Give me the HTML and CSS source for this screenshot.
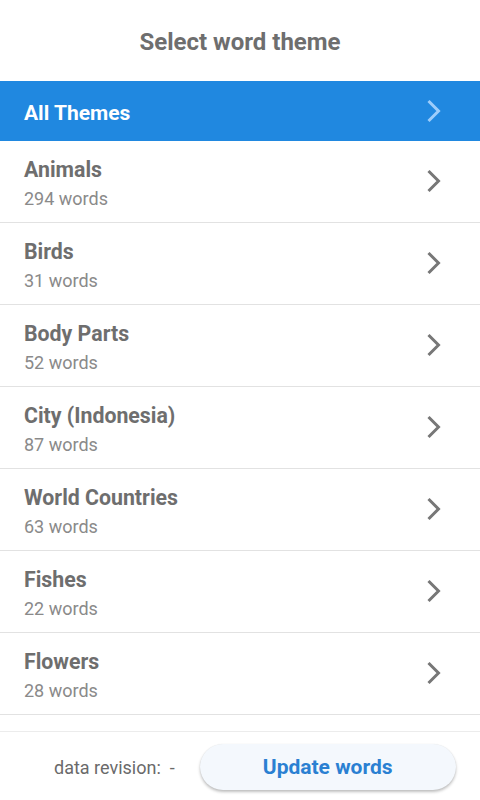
FILE: index.html
```html
<!DOCTYPE html>
<html>
<head>
<meta charset="utf-8">
<link rel="stylesheet" href="styles.css">
</head>
<body>
<div class="app">
  <header class="header">Select word theme</header>
  <div class="list">
    <div class="row row-all">
      <span class="all-title">All Themes</span>
      <svg class="chev" width="16" height="24" viewBox="0 0 16 24"><path d="M2.5 2 L12.5 12 L2.5 22" fill="none" stroke="#9dcdfb" stroke-width="3"/></svg>
    </div>
    <div class="row"><div class="info"><div class="name">Animals</div><div class="count">294 words</div></div><svg class="chev" width="16" height="24" viewBox="0 0 16 24"><path d="M2.5 2 L12.5 12 L2.5 22" fill="none" stroke="#777" stroke-width="3"/></svg></div>
    <div class="row"><div class="info"><div class="name">Birds</div><div class="count">31 words</div></div><svg class="chev" width="16" height="24" viewBox="0 0 16 24"><path d="M2.5 2 L12.5 12 L2.5 22" fill="none" stroke="#777" stroke-width="3"/></svg></div>
    <div class="row"><div class="info"><div class="name">Body Parts</div><div class="count">52 words</div></div><svg class="chev" width="16" height="24" viewBox="0 0 16 24"><path d="M2.5 2 L12.5 12 L2.5 22" fill="none" stroke="#777" stroke-width="3"/></svg></div>
    <div class="row"><div class="info"><div class="name">City (Indonesia)</div><div class="count">87 words</div></div><svg class="chev" width="16" height="24" viewBox="0 0 16 24"><path d="M2.5 2 L12.5 12 L2.5 22" fill="none" stroke="#777" stroke-width="3"/></svg></div>
    <div class="row"><div class="info"><div class="name">World Countries</div><div class="count">63 words</div></div><svg class="chev" width="16" height="24" viewBox="0 0 16 24"><path d="M2.5 2 L12.5 12 L2.5 22" fill="none" stroke="#777" stroke-width="3"/></svg></div>
    <div class="row"><div class="info"><div class="name">Fishes</div><div class="count">22 words</div></div><svg class="chev" width="16" height="24" viewBox="0 0 16 24"><path d="M2.5 2 L12.5 12 L2.5 22" fill="none" stroke="#777" stroke-width="3"/></svg></div>
    <div class="row"><div class="info"><div class="name">Flowers</div><div class="count">28 words</div></div><svg class="chev" width="16" height="24" viewBox="0 0 16 24"><path d="M2.5 2 L12.5 12 L2.5 22" fill="none" stroke="#777" stroke-width="3"/></svg></div>
  </div>
  <footer class="footer">
    <span class="rev">data revision:&nbsp;&nbsp;-</span>
    <button class="update">Update words</button>
  </footer>
</div>
</body>
</html>
```

FILE: styles.css
```css
* { box-sizing: border-box; }
html, body { margin: 0; padding: 0; background: #fff; }
body { font-family: Roboto, "Noto Sans", sans-serif; }
.app { width: 480px; height: 800px; display: flex; flex-direction: column; overflow: hidden; }
.header {
  height: 81px; flex: none;
  display: flex; align-items: center; justify-content: center;
  font-size: 24px; font-weight: 700; color: #6e6e6e;
  padding-top: 3px;
}
.list { height: 650px; flex: none; overflow: hidden; }
.row {
  height: 82px;
  display: flex; align-items: center; justify-content: space-between;
  padding: 0 38px 0 24px;
  border-bottom: 1px solid #e2e2e2;
}
.row-all { height: 60px; background: #2088e0; border-bottom: none; }
.all-title { color: #fff; font-size: 21px; font-weight: 700; padding-top: 3px; }
.info { display: flex; flex-direction: column; gap: 6px; margin-top: 3px; }
.name { font-size: 21.3px; font-weight: 700; color: #6e6e6e; }
.count { font-size: 18px; color: #8a8a8a; }
.chev { display: block; margin-top: -1px; }
.footer {
  flex: 1;
  border-top: 1px solid #ececec;
  display: flex; align-items: center;
  padding: 2px 24px 0 54px;
  gap: 25px;
}
.rev { font-size: 18px; color: #6a6a6a; }
.update {
  width: 256px; height: 46px;
  border: none; border-radius: 23px;
  background: #f4f8fd;
  box-shadow: 0 2px 3px rgba(0,0,0,0.25), 0 0 1px rgba(0,0,0,0.1);
  color: #2a80d2; font-family: Roboto, sans-serif; font-size: 21px; font-weight: 700;
}
```
